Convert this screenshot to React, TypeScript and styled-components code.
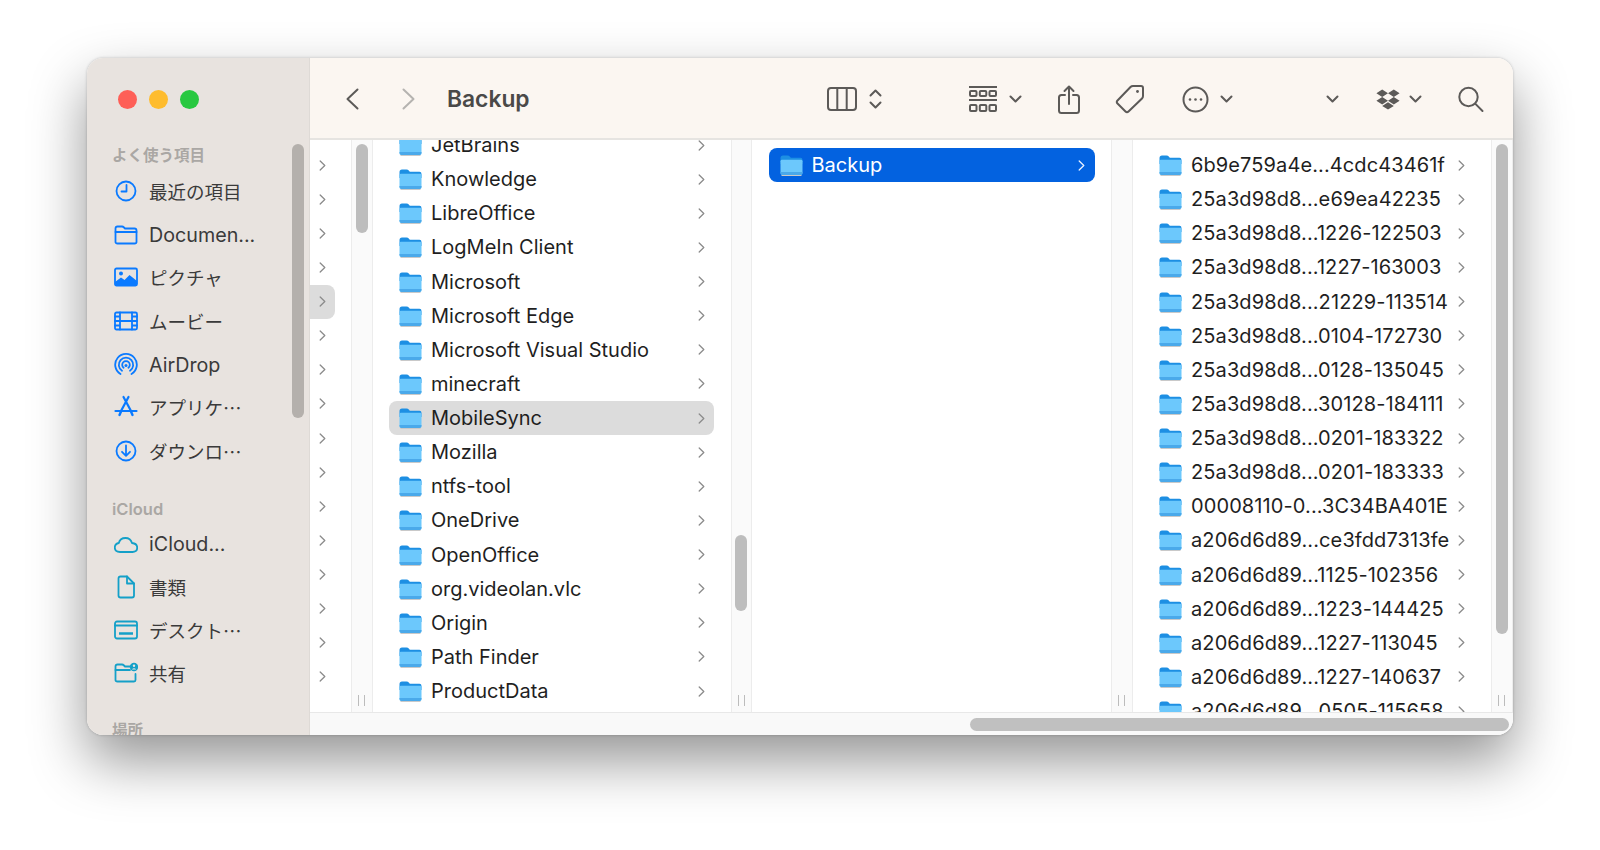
import React from 'react';
import styled, { createGlobalStyle } from 'styled-components';

const GlobalStyle = createGlobalStyle`
  html, body {
    margin: 0;
    padding: 0;
    background: #fff;
    overflow: hidden;
  }
  body {
    font-family: Inter, "Noto Sans CJK JP", "Liberation Sans", sans-serif;
    -webkit-font-smoothing: antialiased;
  }
`;

const Page = styled.div`
  width: 1600px;
  height: 850px;
  padding: 58px 87px 115px;
  box-sizing: border-box;
`;

const Window = styled.div`
  display: flex;
  height: 677px;
  border-radius: 16px;
  overflow: hidden;
  background: #fff;
  box-shadow: 0 26px 56px rgba(0, 0, 0, 0.42), 0 0 3px rgba(0, 0, 0, 0.22);
`;

const Sidebar = styled.aside`
  position: relative;
  flex: 0 0 223px;
  background: #e8e3df;
  overflow: hidden;
  border-right: 1px solid #dedad6;
  box-sizing: border-box;
`;

const Lights = styled.div`
  display: flex;
  align-items: center;
  gap: 12px;
  height: 82px;
  padding-left: 30.5px;
`;

const Light = styled.span<{ $color: string }>`
  width: 19px;
  height: 19px;
  border-radius: 50%;
  background: ${p => p.$color};
`;

const SideHeading = styled.div<{ $gap?: number; $size?: number }>`
  height: 30px;
  line-height: 32px;
  margin-top: ${p => p.$gap ?? 0}px;
  padding-left: 25px;
  font-size: ${p => p.$size ?? 15.5}px;
  font-weight: 600;
  color: #aaa7a4;
`;

const SideItem = styled.div<{ $cjk: boolean }>`
  display: flex;
  align-items: center;
  box-sizing: border-box;
  height: 43.3px;
  padding-left: 26px;
  padding-bottom: ${p => (p.$cjk ? 1.5 : 0)}px;
  font-family: ${p => (p.$cjk ? '"Noto Sans CJK JP", sans-serif' : 'Inter, sans-serif')};
  font-size: ${p => (p.$cjk ? 18.5 : 19.7)}px;
  color: #3a3a3a;
  white-space: nowrap;
`;

const SideIcon = styled.span`
  display: flex;
  justify-content: center;
  width: 26px;
  margin-right: 10px;
`;

const SideThumb = styled.div`
  position: absolute;
  left: 205px;
  top: 86px;
  width: 11.5px;
  height: 274px;
  border-radius: 6px;
  background: #b4b0ac;
`;

const Main = styled.div`
  flex: 1;
  display: flex;
  flex-direction: column;
  min-width: 0;
`;

const Toolbar = styled.header`
  flex: 0 0 82px;
  display: flex;
  align-items: center;
  box-sizing: border-box;
  background: #fbf6f1;
  border-bottom: 2px solid #e6e4e1;
  padding: 2px 0 0 36px;
`;

const ToolIcon = styled.svg<{ $gap?: number }>`
  flex: none;
  display: block;
  margin-left: ${p => p.$gap ?? 0}px;
  color: #5c5a58;
  fill: none;
  stroke: currentColor;
  stroke-width: 2;
  stroke-linecap: round;
  stroke-linejoin: round;
`;

const Title = styled.h1`
  margin: 0 0 0 32px;
  width: 380px;
  font-size: 22.8px;
  line-height: 30px;
  font-weight: 600;
  color: #4a4948;
`;

const Columns = styled.div`
  flex: 1;
  display: flex;
  min-height: 0;
`;

const Column = styled.div<{ $width: number; $offset: number }>`
  flex: 0 0 ${p => p.$width}px;
  overflow: hidden;
  padding-top: ${p => Math.max(p.$offset, 0)}px;
  box-sizing: border-box;
  & > :first-child {
    margin-top: ${p => Math.min(p.$offset, 0)}px;
  }
`;

const Gutter = styled.div<{ $width?: number }>`
  flex: 0 0 ${p => p.$width ?? 21.5}px;
  display: flex;
  flex-direction: column;
  align-items: center;
  box-sizing: border-box;
  background: #fafafa;
  border-left: 1px solid #ececec;
  border-right: 1px solid #ececec;
  padding-bottom: 6px;
`;

const Thumb = styled.div<{ $top: number; $height: number }>`
  width: 12px;
  height: ${p => p.$height}px;
  margin-top: ${p => p.$top}px;
  border-radius: 6px;
  background: #bdbdbd;
`;

const Grip = styled.div`
  width: 7px;
  height: 11px;
  margin-top: auto;
  border-left: 1.5px solid #bcbcbc;
  border-right: 1.5px solid #bcbcbc;
  box-sizing: border-box;
`;

const StubRow = styled.div<{ $on?: boolean }>`
  display: flex;
  align-items: center;
  height: 34.13px;
  width: 25px;
  padding-left: 9px;
  box-sizing: border-box;
  border-radius: 0 8px 8px 0;
  background: ${p => (p.$on ? '#dcdcdc' : 'transparent')};
`;

const Row = styled.div<{ $mode?: 'active' | 'muted' }>`
  display: flex;
  align-items: center;
  height: 34.13px;
  margin: ${p => (p.$mode === 'active' ? '0 16px 0 17px' : '0 17px 0 16px')};
  padding: 0 ${p => (p.$mode === 'active' ? 10 : 8.5)}px 0 ${p => (p.$mode === 'active' ? 10.5 : 10.5)}px;
  border-radius: 8px;
  font-size: 20px;
  color: ${p => (p.$mode === 'active' ? '#fff' : '#1f1f1f')};
  background: ${p =>
    p.$mode === 'active' ? '#0362e0' : p.$mode === 'muted' ? '#dcdcdc' : 'transparent'};
`;

const RowName = styled.span<{ $spaced?: boolean }>`
  flex: 1;
  margin-left: 9px;
  white-space: nowrap;
  letter-spacing: ${p => (p.$spaced ? '0.1px' : 'normal')};
`;

const ChevronSvg = styled.svg<{ $light?: boolean }>`
  flex: none;
  fill: none;
  stroke: ${p => (p.$light ? '#e8f0ff' : '#8b8b8b')};
  stroke-width: 1.3;
  stroke-linecap: round;
  stroke-linejoin: round;
`;

const BottomBar = styled.div`
  flex: 0 0 23px;
  display: flex;
  justify-content: flex-end;
  align-items: center;
  box-sizing: border-box;
  background: #f9f9f9;
  border-top: 1px solid #e8e8e8;
  padding-right: 4px;
`;

const BottomThumb = styled.div`
  width: 539px;
  height: 13px;
  border-radius: 7px;
  background: #c0c0c0;
`;

const Chevron: React.FC<{ light?: boolean }> = ({ light }) => (
  <ChevronSvg $light={light} width="7" height="11" viewBox="0 0 7 11">
    <path d="M1.2 1 L5.8 5.5 L1.2 10" />
  </ChevronSvg>
);

const Folder: React.FC = () => (
  <svg width="23" height="22" viewBox="0 0 23 22" style={{ flex: 'none' }}>
    <path d="M0.5 4 Q0.5 1.5 3 1.5 H7.5 Q9 1.5 10 2.8 L10.8 3.8 H20.5 Q22.5 3.8 22.5 6 V10 H0.5 Z" fill="#1d8fe3" />
    <path d="M0.5 7.2 Q0.5 5.8 2 5.8 H21 Q22.5 5.8 22.5 7.2 V19 Q22.5 21 20.5 21 H2.5 Q0.5 21 0.5 19 Z" fill="#6cc8fc" />
    <path d="M0.5 18 H22.5 V19 Q22.5 21 20.5 21 H2.5 Q0.5 21 0.5 19 Z" fill="#4aa9ea" />
    <path d="M1.5 21.5 H21.5" stroke="#c9c9c9" strokeWidth="1" />
  </svg>
);

const blue = '#0a7aff';
const teal = '#14a0c8';

const SideSvg: React.FC<{ color: string; children: React.ReactNode }> = ({ color, children }) => (
  <svg
    width="24"
    height="24"
    viewBox="0 0 24 24"
    fill="none"
    stroke={color}
    strokeWidth="1.8"
    strokeLinecap="round"
    strokeLinejoin="round"
  >
    {children}
  </svg>
);

const icons: Record<string, React.ReactNode> = {
  clock: (
    <SideSvg color={blue}>
      <circle cx="12" cy="12" r="9.5" />
      <path d="M12.5 6 V12.5 H7.5" />
    </SideSvg>
  ),
  folder: (
    <SideSvg color={blue}>
      <path d="M1.5 5.5 Q1.5 3.5 3.5 3.5 H8 Q9 3.5 10 4.5 L11 5.5 H20.5 Q22.5 5.5 22.5 7.5 V19 Q22.5 20.5 20.5 20.5 H3.5 Q1.5 20.5 1.5 19 Z" />
      <path d="M1.5 9 H22.5" />
    </SideSvg>
  ),
  photo: (
    <SideSvg color={blue}>
      <rect x="1" y="3.5" width="22" height="17" rx="1.5" />
      <circle cx="7" cy="8.5" r="2" fill={blue} stroke="none" />
      <path d="M1 20.5 V17 L7 12.5 L10.5 15 L15.5 10 L23 16 V20.5 Z" fill={blue} stroke="none" />
    </SideSvg>
  ),
  film: (
    <SideSvg color={blue}>
      <rect x="1" y="3.5" width="22" height="17" rx="1.5" />
      <path d="M6 3.5 V20.5 M18 3.5 V20.5 M6 12 H18 M1 7.5 H6 M1 12 H6 M1 16.5 H6 M18 7.5 H23 M18 12 H23 M18 16.5 H23" />
    </SideSvg>
  ),
  airdrop: (
    <SideSvg color={blue}>
      <path d="M6.5 21 A10.8 10.8 0 1 1 17.5 21" />
      <path d="M8 17.8 A7.2 7.2 0 1 1 16 17.8" />
      <path d="M9.6 14.8 A3.8 3.8 0 1 1 14.4 14.8" />
      <path d="M12 12.5 L12 12.5" strokeWidth="3" />
    </SideSvg>
  ),
  apps: (
    <SideSvg color={blue}>
      <path d="M9.5 2 L17 16 M14.5 2 L7 16 M1.5 16 H22.5" strokeWidth="2.2" />
      <path d="M5.5 20 L7 16.5 M18.5 20 L17 16.5" strokeWidth="2.4" />
    </SideSvg>
  ),
  download: (
    <SideSvg color={blue}>
      <circle cx="12" cy="12" r="9.5" />
      <path d="M12 6.5 V16.5 M8 12.8 L12 16.8 L16 12.8" />
    </SideSvg>
  ),
  cloud: (
    <SideSvg color={teal}>
      <path d="M6 20 Q0.8 20 0.8 15.6 Q0.8 11.8 4.8 11 Q6 6 11.5 6 Q16.5 6 18 11 Q23.2 11.5 23.2 15.8 Q23.2 20 18.5 20 Z" />
    </SideSvg>
  ),
  doc: (
    <SideSvg color={teal}>
      <path d="M4.5 3.5 Q4.5 1.5 6.5 1.5 H13 L20 8.5 V20.5 Q20 22.5 18 22.5 H6.5 Q4.5 22.5 4.5 20.5 Z" />
      <path d="M13 1.5 V8.5 H20" />
    </SideSvg>
  ),
  desktop: (
    <SideSvg color={teal}>
      <rect x="1" y="3.5" width="22" height="17" rx="2" />
      <path d="M1 7.5 H23" />
      <path d="M5 15.5 H19" strokeWidth="2.6" strokeLinecap="butt" />
    </SideSvg>
  ),
  shared: (
    <SideSvg color={teal}>
      <path d="M17 5.5 H11 L10 4.5 Q9 3.5 8 3.5 H3.5 Q1.5 3.5 1.5 5.5 V19 Q1.5 20.5 3.5 20.5 H20 Q21.5 20.5 21.5 19 V13" />
      <path d="M1.5 9 H16" />
      <circle cx="20" cy="6" r="4.2" fill={teal} stroke="none" />
      <circle cx="20" cy="4.8" r="1.2" fill="#e8e3df" stroke="none" />
      <path d="M17.8 8.6 Q20 5.8 22.2 8.6 Z" fill="#e8e3df" stroke="none" />
    </SideSvg>
  ),
};

const favourites = [
  ['clock', '最近の項目'],
  ['folder', 'Documen...'],
  ['photo', 'ピクチャ'],
  ['film', 'ムービー'],
  ['airdrop', 'AirDrop'],
  ['apps', 'アプリケ…'],
  ['download', 'ダウンロ…'],
];

const cloudItems = [
  ['cloud', 'iCloud...'],
  ['doc', '書類'],
  ['desktop', 'デスクト…'],
  ['shared', '共有'],
];

const appFolders = [
  'JetBrains',
  'Knowledge',
  'LibreOffice',
  'LogMeIn Client',
  'Microsoft',
  'Microsoft Edge',
  'Microsoft Visual Studio',
  'minecraft',
  'MobileSync',
  'Mozilla',
  'ntfs-tool',
  'OneDrive',
  'OpenOffice',
  'org.videolan.vlc',
  'Origin',
  'Path Finder',
  'ProductData',
];

const backups = [
  '6b9e759a4e...4cdc43461f',
  '25a3d98d8...e69ea42235',
  '25a3d98d8...1226-122503',
  '25a3d98d8...1227-163003',
  '25a3d98d8...21229-113514',
  '25a3d98d8...0104-172730',
  '25a3d98d8...0128-135045',
  '25a3d98d8...30128-184111',
  '25a3d98d8...0201-183322',
  '25a3d98d8...0201-183333',
  '00008110-0...3C34BA401E',
  'a206d6d89...ce3fdd7313fe',
  'a206d6d89...1125-102356',
  'a206d6d89...1223-144425',
  'a206d6d89...1227-113045',
  'a206d6d89...1227-140637',
  'a206d6d89...0505-115658',
];

const SmallChevron: React.FC<{ gap?: number }> = ({ gap }) => (
  <ToolIcon $gap={gap} width="13" height="8" viewBox="0 0 13 8" strokeWidth="2.2">
    <path d="M1.5 1.5 L6.5 6.5 L11.5 1.5" />
  </ToolIcon>
);

const FinderToolbar: React.FC = () => (
  <Toolbar>
    <ToolIcon width="13" height="22" viewBox="0 0 13 22">
      <path d="M11.5 1.5 L1.5 11 L11.5 20.5" />
    </ToolIcon>
    <ToolIcon $gap={43} width="13" height="22" viewBox="0 0 13 22" style={{ color: '#b5b3b0' }}>
      <path d="M1.5 1.5 L11.5 11 L1.5 20.5" />
    </ToolIcon>
    <Title>Backup</Title>
    <ToolIcon width="30" height="24" viewBox="0 0 30 24">
      <rect x="1" y="1" width="28" height="22" rx="3" />
      <path d="M10.3 1 V23 M19.7 1 V23" />
    </ToolIcon>
    <ToolIcon $gap={12} width="13" height="20" viewBox="0 0 13 20" strokeWidth="2.2">
      <path d="M1.5 6.5 L6.5 1.5 L11.5 6.5 M1.5 13.5 L6.5 18.5 L11.5 13.5" />
    </ToolIcon>
    <ToolIcon $gap={87} width="28" height="27" viewBox="0 0 28 27" strokeWidth="1.6">
      <path d="M0 1 H28 M0 14 H28" />
      <rect x="1" y="5" width="6.5" height="5" rx="1" />
      <rect x="10.8" y="5" width="6.5" height="5" rx="1" />
      <rect x="20.5" y="5" width="6.5" height="5" rx="1" />
      <rect x="1" y="19" width="6.5" height="6" rx="1" />
      <rect x="10.8" y="19" width="6.5" height="6" rx="1" />
      <rect x="20.5" y="19" width="6.5" height="6" rx="1" />
    </ToolIcon>
    <SmallChevron gap={12} />
    <ToolIcon $gap={36} width="22" height="29" viewBox="0 0 22 29">
      <path d="M7 10 H3.5 Q1 10 1 12.5 V25.5 Q1 28 3.5 28 H18.5 Q21 28 21 25.5 V12.5 Q21 10 18.5 10 H15" />
      <path d="M11 19 V1.5 M6.5 6 L11 1.5 L15.5 6" />
    </ToolIcon>
    <ToolIcon $gap={35} width="30" height="30" viewBox="0 0 30 30">
      <path d="M2.5 16.5 L15.5 3 Q16.5 2 18 2 H26 Q28 2 28 4 V12 Q28 13.5 27 14.5 L13.5 27.5 Q12 29 10.5 27.5 L2.5 19.5 Q1 18 2.5 16.5 Z" />
      <circle cx="22.5" cy="7.5" r="1.4" fill="currentColor" stroke="none" />
    </ToolIcon>
    <ToolIcon $gap={37} width="27" height="27" viewBox="0 0 27 27">
      <circle cx="13.5" cy="13.5" r="12" />
      <circle cx="8" cy="13.5" r="1.3" fill="currentColor" stroke="none" />
      <circle cx="13.5" cy="13.5" r="1.3" fill="currentColor" stroke="none" />
      <circle cx="19" cy="13.5" r="1.3" fill="currentColor" stroke="none" />
    </ToolIcon>
    <SmallChevron gap={11} />
    <SmallChevron gap={93} />
    <ToolIcon $gap={37} width="24" height="21" viewBox="0 0 24 21" style={{ fill: '#5c5a58', stroke: 'none' }}>
      <path d="M6.2 0.5 L12 4.2 L6.2 8 L0.4 4.2 Z M17.8 0.5 L23.6 4.2 L17.8 8 L12 4.2 Z M6.2 8 L12 11.8 L6.2 15.5 L0.4 11.8 Z M17.8 8 L23.6 11.8 L17.8 15.5 L12 11.8 Z M12 13.2 L17.8 16.9 L12 20.6 L6.2 16.9 Z" />
    </ToolIcon>
    <SmallChevron gap={9} />
    <ToolIcon $gap={36} width="26" height="27" viewBox="0 0 26 27" strokeWidth="2.2">
      <circle cx="10.5" cy="11" r="9.2" />
      <path d="M17.2 17.6 L24.5 25" />
    </ToolIcon>
  </Toolbar>
);

const SideGroup: React.FC<{ items: string[][] }> = ({ items }) => (
  <>
    {items.map(([icon, label]) => (
      <SideItem key={label} $cjk={!/^[A-Za-z]/.test(label)}>
        <SideIcon>{icons[icon]}</SideIcon>
        {label}
      </SideItem>
    ))}
  </>
);

const App: React.FC = () => {
  return (
    <Page>
      <GlobalStyle />
      <Window>
        <Sidebar>
          <Lights>
            <Light $color="#fe5f57" />
            <Light $color="#febc2e" />
            <Light $color="#28c840" />
          </Lights>
          <SideHeading>よく使う項目</SideHeading>
          <SideGroup items={favourites} />
          <SideHeading $gap={19.5} $size={16.5}>iCloud</SideHeading>
          <SideGroup items={cloudItems} />
          <SideHeading $gap={19.5}>場所</SideHeading>
          <SideThumb />
        </Sidebar>
        <Main>
          <FinderToolbar />
          <Columns>
            <Column $width={41} $offset={8}>
              {Array.from({ length: 16 }, (_, i) => (
                <StubRow key={i} $on={i === 4}>
                  <Chevron />
                </StubRow>
              ))}
            </Column>
            <Gutter>
              <Thumb $top={4} $height={89} />
              <Grip />
            </Gutter>
            <Column $width={358} $offset={-12}>
              {appFolders.map(name => (
                <Row key={name} $mode={name === 'MobileSync' ? 'muted' : undefined}>
                  <Folder />
                  <RowName>{name}</RowName>
                  <Chevron />
                </Row>
              ))}
            </Column>
            <Gutter>
              <Thumb $top={395} $height={76} />
              <Grip />
            </Gutter>
            <Column $width={359} $offset={8}>
              <Row $mode="active">
                <Folder />
                <RowName>Backup</RowName>
                <Chevron light />
              </Row>
            </Column>
            <Gutter>
              <Grip />
            </Gutter>
            <Column $width={358} $offset={8}>
              {backups.map(name => (
                <Row key={name}>
                  <Folder />
                  <RowName $spaced>{name}</RowName>
                  <Chevron />
                </Row>
              ))}
            </Column>
            <Gutter $width={22}>
              <Thumb $top={4} $height={490} />
              <Grip />
            </Gutter>
          </Columns>
          <BottomBar>
            <BottomThumb />
          </BottomBar>
        </Main>
      </Window>
    </Page>
  );
};

export default App;
